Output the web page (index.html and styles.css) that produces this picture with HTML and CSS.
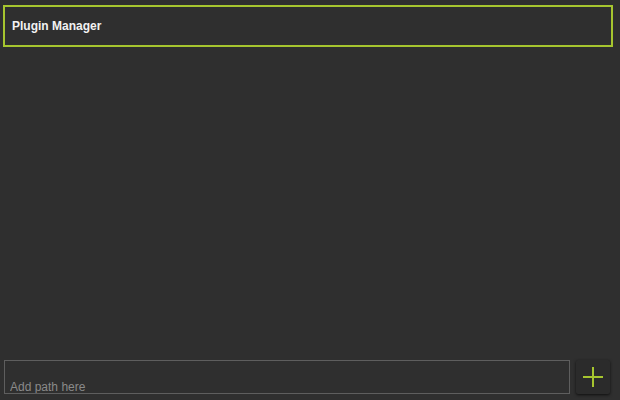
FILE: index.html
```html
<!DOCTYPE html>
<html>
<head>
<meta charset="utf-8">
<link rel="stylesheet" href="styles.css">
</head>
<body>
<div class="app">
  <div class="header"><span class="title">Plugin Manager</span></div>
  <div class="content"></div>
  <div class="footer">
    <input class="path-input" type="text" placeholder="Add path here">
    <button class="add-btn" aria-label="Add">
      <svg width="20" height="20" viewBox="0 0 20 20"><path d="M10 0V20M0 10H20" stroke="#a6c52f" stroke-width="2"/></svg>
    </button>
  </div>
</div>
</body>
</html>
```
FILE: styles.css
```css
html, body { margin: 0; padding: 0; background: #2f2f2f; }
.app {
  display: flex;
  flex-direction: column;
  height: 400px;
  font-family: "Liberation Sans", Arial, sans-serif;
}
.header {
  margin: 5px 7px 0 3px;
  height: 38px;
  border: 2px solid #a6c52f;
  display: flex;
  align-items: center;
  padding-left: 7px;
}
.title { color: #f2f2f2; font-weight: bold; font-size: 12px; }
.content { flex: 1; }
.footer {
  display: flex;
  gap: 6px;
  padding: 0 10px 6px 4px;
}
.path-input {
  flex: 1;
  box-sizing: border-box;
  height: 34px;
  margin: 0;
  background: #2f2f2f;
  border: 1px solid #5e5e5e;
  padding: 20px 5px 0 5px;
  line-height: 13px;
  font-family: "Liberation Sans", Arial, sans-serif;
  font-size: 12px;
  color: #cfcfcf;
  outline: none;
}
.path-input::placeholder { color: #8a8a8a; }
.add-btn {
  width: 34px;
  height: 34px;
  padding: 0;
  margin: 0;
  border: none;
  border-radius: 2px;
  background: #2b2b2b;
  box-shadow: 0 1px 3px rgba(0,0,0,0.7);
  display: flex;
  align-items: center;
  justify-content: center;
}
```
